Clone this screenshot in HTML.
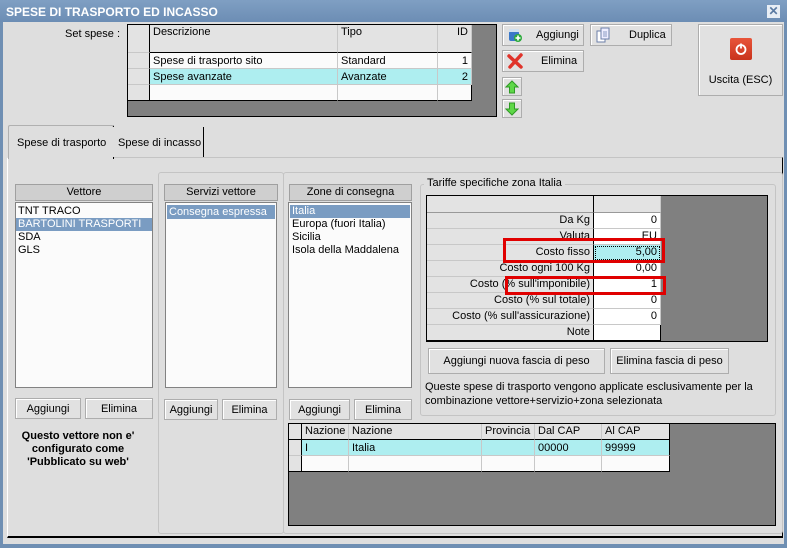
<!DOCTYPE html>
<html><head><meta charset="utf-8"><style>
*{box-sizing:border-box;margin:0;padding:0}
body{width:787px;height:548px;position:relative;overflow:hidden;background:#6f8fb3;font-family:"Liberation Sans",sans-serif;font-size:11px;color:#000;white-space:nowrap}
.a{position:absolute}
.btn{position:absolute;background:#e1e1e1;border:1px solid #adadad;box-shadow:inset 1px 1px 0 #fff;display:flex;align-items:center;justify-content:center;font-size:11px}
.grid{position:absolute;background:#808080;border:1px solid #000}
.c{position:absolute;border-right:1px solid #c8c8c8;border-bottom:1px solid #c8c8c8;padding:0 3px;line-height:15px;white-space:nowrap;overflow:hidden}
.h{background:#e3e3e3}
.lst{position:absolute;background:#fbfbfb;border:1px solid #828282}
.lh{position:absolute;background:#cfcfcf;border:1px solid #a0a0a0;text-align:center;line-height:14px}
.sel{background:#7a9cc2;color:#fff}
.grp{position:absolute;border:1px solid #c4c4c4;border-radius:3px}
</style></head><body>
<div class="a" style="left:0;top:0;width:787px;height:22px;background:linear-gradient(#7f9fc3,#6c8db4)"></div>
<div class="a" style="left:6px;top:5px;color:#fff;font-weight:bold;font-size:12px">SPESE DI TRASPORTO ED INCASSO</div>
<div class="a" style="left:767px;top:5px;width:13px;height:13px;background:#e8eef5;color:#5b7ba3;font-weight:bold;font-size:12px;line-height:13px;text-align:center">✕</div>
<div class="a" style="left:3px;top:22px;width:781px;height:522px;background:#dedede"></div>

<div class="a" style="left:65px;top:28px">Set spese :</div>
<div class="grid" style="left:127px;top:24px;width:370px;height:93px">
<div class="c h" style="left:0;top:0;width:22px;height:28px;border-right:1px solid #000"></div>
<div class="c h" style="left:22px;top:0;width:188px;height:28px;border-bottom:1px solid #000">Descrizione</div>
<div class="c h" style="left:210px;top:0;width:100px;height:28px;border-bottom:1px solid #000">Tipo</div>
<div class="c h" style="left:310px;top:0;width:34px;height:28px;text-align:right;border-bottom:1px solid #000">ID</div>
<div class="c h" style="left:0;top:28px;width:22px;height:16px;border-right:1px solid #000"></div>
<div class="c" style="left:22px;top:28px;width:188px;height:16px;background:#fbfbfb;line-height:16px">Spese di trasporto sito</div>
<div class="c" style="left:210px;top:28px;width:100px;height:16px;background:#fbfbfb;line-height:16px">Standard</div>
<div class="c" style="left:310px;top:28px;width:34px;height:16px;background:#fbfbfb;text-align:right;line-height:16px">1</div>
<div class="c h" style="left:0;top:44px;width:22px;height:16px;border-right:1px solid #000"></div>
<div class="c" style="left:22px;top:44px;width:188px;height:16px;background:#aeeef0;line-height:16px">Spese avanzate</div>
<div class="c" style="left:210px;top:44px;width:100px;height:16px;background:#aeeef0;line-height:16px">Avanzate</div>
<div class="c" style="left:310px;top:44px;width:34px;height:16px;background:#aeeef0;text-align:right;line-height:16px">2</div>
<div class="c h" style="left:0;top:60px;width:22px;height:16px;border-right:1px solid #000;border-bottom:1px solid #000"></div>
<div class="c" style="left:22px;top:60px;width:188px;height:16px;background:#fbfbfb;border-bottom:1px solid #000"></div>
<div class="c" style="left:210px;top:60px;width:100px;height:16px;background:#fbfbfb;border-bottom:1px solid #000"></div>
<div class="c" style="left:310px;top:60px;width:34px;height:16px;background:#fbfbfb;border-bottom:1px solid #000;border-right:1px solid #000"></div>
</div>

<div class="btn" style="left:502px;top:24px;width:82px;height:22px;justify-content:flex-start">
<svg style="margin:0 0 0 4px" width="16" height="16" viewBox="0 0 16 16"><rect x="2" y="4" width="10" height="10" rx="2" fill="#3a78c8"/><rect x="2" y="2" width="10" height="3" fill="#cfe0f0"/><circle cx="11" cy="11" r="4" fill="#2caa3c"/><path d="M11 8.5v5M8.5 11h5" stroke="#fff" stroke-width="1.6"/></svg>
<span style="margin-left:13px">Aggiungi</span></div>
<div class="btn" style="left:502px;top:50px;width:82px;height:22px;justify-content:flex-start">
<svg style="margin:0 0 0 4px" width="16" height="16" viewBox="0 0 16 16"><path d="M2 3L14 14M14 2L3 14" stroke="#e0332a" stroke-width="3.5" stroke-linecap="round"/></svg>
<span style="margin-left:18px">Elimina</span></div>
<div class="btn" style="left:590px;top:24px;width:82px;height:22px;justify-content:flex-start">
<svg style="margin:0 0 0 4px" width="16" height="16" viewBox="0 0 16 16"><rect x="2" y="4" width="8" height="11" fill="#fff" stroke="#6c7fa8"/><rect x="6" y="1" width="8" height="11" fill="#eef" stroke="#6c7fa8"/><path d="M8 5h4M8 7h4M8 9h4" stroke="#8a9ac0"/></svg>
<span style="margin-left:18px">Duplica</span></div>
<div class="btn" style="left:502px;top:77px;width:20px;height:19px"><svg width="14" height="14" viewBox="0 0 14 14"><path d="M7 1L13 7H9.5V13H4.5V7H1Z" fill="#5fd848" stroke="#2f9a25"/></svg></div>
<div class="btn" style="left:502px;top:99px;width:20px;height:19px"><svg width="14" height="14" viewBox="0 0 14 14"><path d="M7 13L13 7H9.5V1H4.5V7H1Z" fill="#5fd848" stroke="#2f9a25"/></svg></div>
<div class="btn" style="left:698px;top:24px;width:85px;height:72px;flex-direction:column">
<div style="width:22px;height:22px;background:linear-gradient(#e8553a,#c9331c);border-radius:2px;display:flex;align-items:center;justify-content:center;margin-bottom:14px;margin-top:4px"><svg width="14" height="14" viewBox="0 0 14 14"><circle cx="7" cy="7.5" r="4.5" fill="none" stroke="#fff" stroke-width="1.8"/><path d="M7 1.5v5" stroke="#fff" stroke-width="1.8"/></svg></div>
<span>Uscita (ESC)</span></div>

<div class="a" style="left:7px;top:157px;width:776px;height:381px;border-left:1px solid #fff;border-top:1px solid #c4c4c4;border-bottom:2px solid #000;border-right:1px solid #000"></div>
<div class="a" style="left:8px;top:125px;width:106px;height:34px;background:#dedede;border:1px solid #b0b0b0;border-bottom:none;border-right:1px solid #000;border-radius:2px 2px 0 0;padding:11px 0 0 8px">Spese di trasporto</div>
<div class="a" style="left:113px;top:127px;width:91px;height:30px;background:#dedede;border-right:1px solid #000;padding:10px 0 0 5px">Spese di incasso</div>

<div class="lh" style="left:15px;top:184px;width:138px;height:17px">Vettore</div>
<div class="lst" style="left:15px;top:202px;width:138px;height:186px;line-height:13px;padding-top:2px">
<div style="padding-left:2px">TNT TRACO</div><div class="sel" style="padding-left:2px">BARTOLINI TRASPORTI</div><div style="padding-left:2px">SDA</div><div style="padding-left:2px">GLS</div></div>
<div class="btn" style="left:15px;top:398px;width:66px;height:21px">Aggiungi</div>
<div class="btn" style="left:85px;top:398px;width:68px;height:21px">Elimina</div>
<div class="a" style="left:10px;top:430px;width:136px;text-align:center;font-weight:bold;line-height:13px;white-space:normal">Questo vettore non e' configurato come 'Pubblicato su web'</div>

<div class="grp" style="left:158px;top:172px;width:126px;height:362px"></div>
<div class="lh" style="left:164px;top:184px;width:114px;height:17px">Servizi vettore</div>
<div class="lst" style="left:165px;top:202px;width:112px;height:186px;padding:2px 1px"><div class="sel" style="padding-left:2px;line-height:14px">Consegna espressa</div></div>
<div class="btn" style="left:164px;top:399px;width:54px;height:21px">Aggiungi</div>
<div class="btn" style="left:222px;top:399px;width:55px;height:21px">Elimina</div>

<div class="grp" style="left:283px;top:172px;width:500px;height:362px"></div>
<div class="lh" style="left:289px;top:184px;width:123px;height:17px">Zone di consegna</div>
<div class="lst" style="left:288px;top:202px;width:124px;height:186px;padding:2px 1px;line-height:13px">
<div class="sel" style="padding-left:2px">Italia</div><div style="padding-left:2px">Europa (fuori Italia)</div><div style="padding-left:2px">Sicilia</div><div style="padding-left:2px">Isola della Maddalena</div></div>
<div class="btn" style="left:289px;top:399px;width:61px;height:21px">Aggiungi</div>
<div class="btn" style="left:354px;top:399px;width:58px;height:21px">Elimina</div>

<div class="grp" style="left:420px;top:184px;width:356px;height:232px"></div>
<div class="a" style="left:424px;top:177px;background:#dedede;padding:0 3px">Tariffe specifiche zona Italia</div>
<div class="grid" style="left:426px;top:195px;width:342px;height:147px">
<div class="c h" style="left:0;top:0;width:167px;height:17px;border-right:1px solid #000;border-bottom:1px solid #999"></div>
<div class="c h" style="left:167px;top:0;width:67px;height:17px;border-bottom:1px solid #999"></div>
<div style="position:absolute;left:0;top:17px;width:235px">
<div style="display:flex;height:16px"><div class="c h" style="position:static;width:167px;text-align:right;border-right:1px solid #000">Da Kg</div><div class="c" style="position:static;width:67px;background:#fff;text-align:right">0</div></div>
<div style="display:flex;height:16px"><div class="c h" style="position:static;width:167px;text-align:right;border-right:1px solid #000">Valuta</div><div class="c" style="position:static;width:67px;background:#fff;text-align:right">EU</div></div>
<div style="display:flex;height:16px"><div class="c h" style="position:static;width:167px;text-align:right;border-right:1px solid #000">Costo fisso</div><div class="c" style="position:static;width:67px;background:#aeeef0;text-align:right;outline:1px dotted #000;outline-offset:-2px">5,00</div></div>
<div style="display:flex;height:16px"><div class="c h" style="position:static;width:167px;text-align:right;border-right:1px solid #000">Costo ogni 100 Kg</div><div class="c" style="position:static;width:67px;background:#fff;text-align:right">0,00</div></div>
<div style="display:flex;height:16px"><div class="c h" style="position:static;width:167px;text-align:right;border-right:1px solid #000">Costo (% sull'imponibile)</div><div class="c" style="position:static;width:67px;background:#fff;text-align:right">1</div></div>
<div style="display:flex;height:16px"><div class="c h" style="position:static;width:167px;text-align:right;border-right:1px solid #000">Costo (% sul totale)</div><div class="c" style="position:static;width:67px;background:#fff;text-align:right">0</div></div>
<div style="display:flex;height:16px"><div class="c h" style="position:static;width:167px;text-align:right;border-right:1px solid #000">Costo (% sull'assicurazione)</div><div class="c" style="position:static;width:67px;background:#fff;text-align:right">0</div></div>
<div style="display:flex;height:16px"><div class="c h" style="position:static;width:167px;text-align:right;border-right:1px solid #000;border-bottom:1px solid #000">Note</div><div class="c" style="position:static;width:67px;background:#fff;border-bottom:1px solid #000;border-right:1px solid #000"></div></div>
</div></div>
<div class="a" style="left:503px;top:238px;width:162px;height:25px;border:3px solid #e00000"></div>
<div class="a" style="left:505px;top:276px;width:161px;height:19px;border:3px solid #e00000"></div>
<div class="btn" style="left:428px;top:348px;width:177px;height:26px">Aggiungi nuova fascia di peso</div>
<div class="btn" style="left:610px;top:348px;width:119px;height:26px">Elimina fascia di peso</div>
<div class="a" style="left:425px;top:380px;line-height:14px;width:350px;white-space:normal">Queste spese di trasporto vengono applicate esclusivamente per la combinazione vettore+servizio+zona selezionata</div>

<div class="grid" style="left:288px;top:423px;width:488px;height:103px">
<div class="c h" style="left:0;top:0;width:13px;height:16px;border-right:1px solid #000;border-bottom:1px solid #000"></div>
<div class="c h" style="left:13px;top:0;width:47px;height:16px;border-bottom:1px solid #000">Nazione</div>
<div class="c h" style="left:60px;top:0;width:133px;height:16px;border-bottom:1px solid #000">Nazione</div>
<div class="c h" style="left:193px;top:0;width:53px;height:16px;border-bottom:1px solid #000">Provincia</div>
<div class="c h" style="left:246px;top:0;width:67px;height:16px;border-bottom:1px solid #000">Dal CAP</div>
<div class="c h" style="left:313px;top:0;width:68px;height:16px;border-bottom:1px solid #000;border-right:1px solid #000">Al CAP</div>
<div class="c h" style="left:0;top:16px;width:13px;height:16px;border-right:1px solid #000"></div>
<div class="c" style="left:13px;top:16px;width:47px;height:16px;background:#aeeef0;line-height:16px">I</div>
<div class="c" style="left:60px;top:16px;width:133px;height:16px;background:#aeeef0;line-height:16px">Italia</div>
<div class="c" style="left:193px;top:16px;width:53px;height:16px;background:#aeeef0"></div>
<div class="c" style="left:246px;top:16px;width:67px;height:16px;background:#aeeef0;line-height:16px">00000</div>
<div class="c" style="left:313px;top:16px;width:68px;height:16px;background:#aeeef0;line-height:16px;border-right:1px solid #000">99999</div>
<div class="c h" style="left:0;top:32px;width:13px;height:16px;border-right:1px solid #000;border-bottom:1px solid #000"></div>
<div class="c" style="left:13px;top:32px;width:47px;height:16px;background:#fbfbfb;border-bottom:1px solid #000"></div>
<div class="c" style="left:60px;top:32px;width:133px;height:16px;background:#fbfbfb;border-bottom:1px solid #000"></div>
<div class="c" style="left:193px;top:32px;width:53px;height:16px;background:#fbfbfb;border-bottom:1px solid #000"></div>
<div class="c" style="left:246px;top:32px;width:67px;height:16px;background:#fbfbfb;border-bottom:1px solid #000"></div>
<div class="c" style="left:313px;top:32px;width:68px;height:16px;background:#fbfbfb;border-bottom:1px solid #000;border-right:1px solid #000"></div>
</div>
</body></html>
